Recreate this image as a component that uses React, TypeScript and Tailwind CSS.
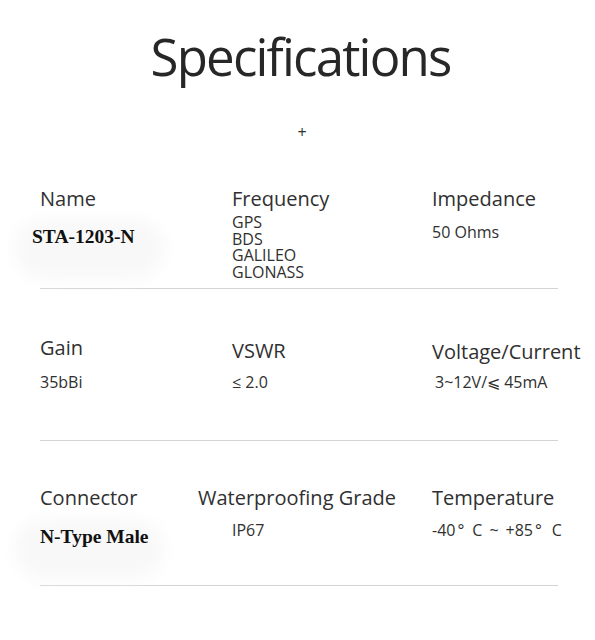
import React from "react";

const sans = { fontFamily: '"Open Sans", "Noto Sans", sans-serif' };
const serif = { fontFamily: '"Liberation Serif", "Times New Roman", serif' };

function Line() {
    return <div className="ml-[40px] h-px w-[518px] bg-[#d4d4d4]" />;
}

function Glow() {
    return (
        <div className="pointer-events-none absolute left-[-26px] top-[-8px] h-[60px] w-[150px] rounded-full bg-[#f8f8f8] blur-[8px]" />
    );
}

export default function App() {
    return (
        <div
            className="h-[640px] w-[595px] overflow-hidden bg-white text-[#303030]"
            style={sans}
        >
            {/* title */}
            <div className="pt-[31px] text-center">
                <h1 className="ml-[6px] text-[51px] font-medium leading-none tracking-[-1.8px] text-[#272727]">
                    Specifications
                </h1>
                <div className="ml-[9px] mt-[42px] text-[16px] leading-none">+</div>
            </div>

            {/* row 1 */}
            <div className="mt-[49px] grid h-[99px] grid-cols-[192px_198px_1fr] pl-[40px]">
                <div>
                    <div className="text-[20px] leading-none">Name</div>
                    <div className="relative mt-[18px]">
                        <Glow />
                        <div
                            className="relative ml-[-8px] text-[19.5px] font-bold leading-none text-[#111]"
                            style={serif}
                        >
                            STA-1203-N
                        </div>
                    </div>
                </div>
                <div>
                    <div className="text-[20px] leading-none">Frequency</div>
                    <div className="mt-[5px] text-[16px] leading-[16.7px]">
                        <div>GPS</div>
                        <div>BDS</div>
                        <div>GALILEO</div>
                        <div>GLONASS</div>
                    </div>
                </div>
                <div className="pl-[2px]">
                    <div className="text-[20px] leading-none">Impedance</div>
                    <div className="mt-[15px] text-[16px] leading-none">
                        50 Ohms
                    </div>
                </div>
            </div>
            <Line />

            {/* row 2 */}
            <div className="mt-[49px] grid h-[102px] grid-cols-[192px_198px_1fr] pl-[40px]">
                <div>
                    <div className="text-[20px] leading-none">Gain</div>
                    <div className="mt-[16px] text-[16px] leading-none">
                        35bBi
                    </div>
                </div>
                <div className="pt-[3px]">
                    <div className="text-[20px] leading-none">VSWR</div>
                    <div className="mt-[13px] text-[16px] leading-none">
                        ≤ 2.0
                    </div>
                </div>
                <div className="pl-[2px] pt-[4px]">
                    <div className="text-[20px] leading-none">
                        Voltage/Current
                    </div>
                    <div className="ml-[3px] mt-[12px] text-[16px] leading-none">
                        3~12V/⩽ 45mA
                    </div>
                </div>
            </div>
            <Line />

            {/* row 3 */}
            <div className="mt-[47px] grid h-[97px] grid-cols-[192px_198px_1fr] pl-[40px]">
                <div>
                    <div className="text-[20px] leading-none">Connector</div>
                    <div className="relative mt-[19px]">
                        <Glow />
                        <div
                            className="relative text-[19.5px] font-bold leading-none text-[#111]"
                            style={serif}
                        >
                            N-Type Male
                        </div>
                    </div>
                </div>
                <div>
                    <div className="ml-[-34px] whitespace-nowrap text-[20px] leading-none">
                        Waterproofing Grade
                    </div>
                    <div className="mt-[14px] text-[16px] leading-none">
                        IP67
                    </div>
                </div>
                <div className="pl-[2px]">
                    <div className="text-[20px] leading-none">Temperature</div>
                    <div className="mt-[14px] whitespace-nowrap text-[16px] leading-none">
                        -40<span className="ml-[2px]">°</span>
                        <span className="ml-[8px]">C</span>
                        <span className="ml-[7px]">~</span>
                        <span className="ml-[7px]">+85</span>
                        <span className="ml-[2px]">°</span>
                        <span className="ml-[10px]">C</span>
                    </div>
                </div>
            </div>
            <Line />
        </div>
    );
}
